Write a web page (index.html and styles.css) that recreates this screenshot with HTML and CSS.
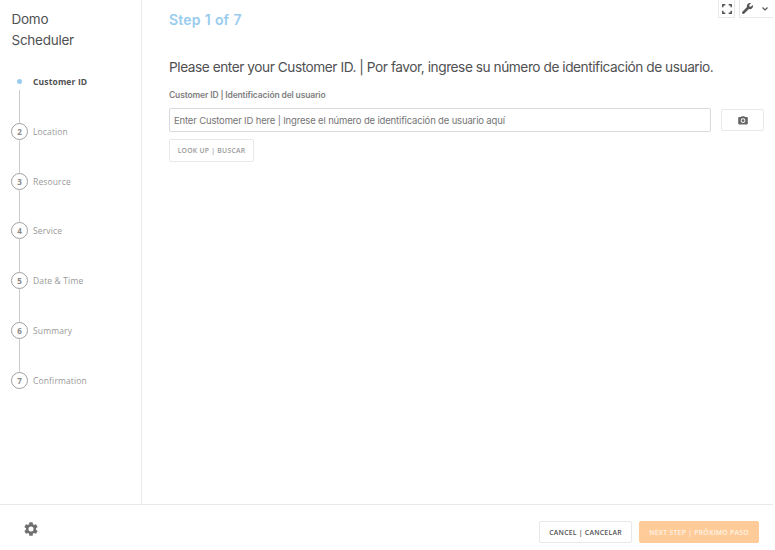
FILE: index.html
```
<!DOCTYPE html>
<html lang="en">
<head>
<meta charset="utf-8">
<title>Domo Scheduler</title>
<link rel="stylesheet" href="styles.css">
</head>
<body>
<div class="app">
  <div class="body">
    <aside class="sidebar">
      <h1 class="brand">Domo<br>Scheduler</h1>
      <ol class="steps">
        <li class="step current"><span class="mark"><i class="dot"></i></span><span class="name">Customer ID</span></li>
        <li class="step"><span class="mark"><b class="num">2</b></span><span class="name">Location</span></li>
        <li class="step"><span class="mark"><b class="num">3</b></span><span class="name">Resource</span></li>
        <li class="step"><span class="mark"><b class="num">4</b></span><span class="name">Service</span></li>
        <li class="step"><span class="mark"><b class="num">5</b></span><span class="name">Date &amp; Time</span></li>
        <li class="step"><span class="mark"><b class="num">6</b></span><span class="name">Summary</span></li>
        <li class="step"><span class="mark"><b class="num">7</b></span><span class="name">Confirmation</span></li>
      </ol>
    </aside>
    <main class="content">
      <h2 class="progress">Step 1 of 7</h2>
      <p class="prompt">Please enter your Customer ID. | Por favor, ingrese su número de identificación de usuario.</p>
      <label class="label" for="cid">Customer ID | Identificación del usuario</label>
      <div class="row">
        <input class="field" id="cid" type="text" placeholder="Enter Customer ID here | Ingrese el número de identificación de usuario aquí">
        <button class="btn camera" aria-label="Camera">
          <svg width="10" height="9" viewBox="0 0 10 9"><path fill="#666" fill-rule="evenodd" d="M1 1.1h1.9L3.6.3h2.8l.7.8H9c.5 0 .8.3.8.8v5.7c0 .5-.3.8-.8.8H1c-.5 0-.8-.3-.8-.8V1.9c0-.5.3-.8.8-.8zM5 2.2a2.4 2.4 0 1 0 0 4.8 2.4 2.4 0 0 0 0-4.8z"/><circle cx="5" cy="4.6" r="1.4" fill="#666"/></svg>
        </button>
      </div>
      <button class="btn lookup">LOOK UP | BUSCAR</button>
      <div class="tools">
        <span class="tool full"><svg width="10" height="10" viewBox="0 0 10 10"><path fill="none" stroke="#555" stroke-width="1.5" d="M.8 3.3V.8h2.5M6.7.8h2.5v2.5M9.2 6.7v2.5H6.7M3.3 9.2H.8V6.7"/></svg></span>
        <span class="tool menu"><svg width="11" height="11" viewBox="0 0 512 512"><path fill="#555" d="M507.7 109.1c-2.2-9-13.5-12.1-20.1-5.5l-74.4 74.4-67.9-11.3L334 98.8l74.4-74.4c6.6-6.6 3.4-17.9-5.7-20.2-47.4-11.7-99.6.9-136.6 37.9-39.6 39.6-50.6 97.1-34.1 147.2L18.7 402.8c-25 25-25 65.5 0 90.5s65.5 25 90.5 0l213.2-213.2c50.1 16.7 107.5 5.7 147.4-34.2 37.1-37.1 49.7-89.3 37.9-136.8z"/></svg><svg width="6" height="4" viewBox="0 0 6 4"><path fill="none" stroke="#555" stroke-width="1.2" d="M.5.5 3 3 5.5.5"/></svg></span>
      </div>
    </main>
  </div>
  <footer class="footer">
    <svg class="gear" width="14" height="14" viewBox="2 2 20 20"><path fill="#707070" d="M19.14 12.94c.04-.3.06-.61.06-.94s-.02-.64-.07-.94l2.03-1.58c.18-.14.23-.41.12-.61l-1.92-3.32c-.12-.22-.37-.29-.59-.22l-2.39.96c-.5-.38-1.03-.7-1.62-.94l-.36-2.54c-.04-.24-.24-.41-.48-.41h-3.84c-.24 0-.43.17-.47.41l-.36 2.54c-.59.24-1.13.57-1.62.94l-2.39-.96c-.22-.08-.47 0-.59.22L2.74 8.87c-.12.21-.08.47.12.61l2.03 1.58c-.05.3-.09.63-.09.94s.02.64.07.94l-2.03 1.58c-.18.14-.23.41-.12.61l1.92 3.32c.12.22.37.29.59.22l2.39-.96c.5.38 1.03.7 1.62.94l.36 2.54c.05.24.24.41.48.41h3.84c.24 0 .44-.17.47-.41l.36-2.54c.59-.24 1.13-.56 1.62-.94l2.39.96c.22.08.47 0 .59-.22l1.92-3.32c.12-.22.07-.47-.12-.61l-2.01-1.58zM12 15.6A3.6 3.6 0 1 1 12 8.4a3.6 3.6 0 0 1 0 7.2z"/></svg>
    <button class="btn cancel">CANCEL | CANCELAR</button>
    <button class="btn next">NEXT STEP | PRÓXIMO PASO</button>
  </footer>
</div>
</body>
</html>
```
FILE: styles.css
```
* { box-sizing: border-box; }
body { margin: 0; background: #fff; color: #505152; font-family: "Open Sans", sans-serif; }
h1, h2, p, ol { margin: 0; padding: 0; font-weight: 400; }
.app { width: 773px; height: 550px; display: flex; flex-direction: column; }
.body { height: 504px; display: flex; }
.sidebar { flex: 0 0 142px; padding: 9px 0 0 11px; border-right: 1px solid #ebebeb; }
.brand { padding-left: .5px; font: 400 13.5px/21px Inter, sans-serif; letter-spacing: -.25px; }
.steps { list-style: none; margin-top: 22px; }
.step { position: relative; height: 49.83px; display: flex; align-items: flex-start; gap: 5px; }
.step::before { content: ""; position: absolute; left: 8px; top: 17px; width: 1px; height: 33px; background: #ccc; }
.step:first-child::before { top: 8px; margin-top: 0; height: 42px; clip-path: inset(0); }
.step.current::before { top: 8px; background: linear-gradient(transparent 0 1px, #ccc 1px); }
.step:last-child::before { display: none; }
.mark { position: relative; width: 17px; height: 17px; display: flex; align-items: center; justify-content: center; background: #fff; }
.dot { width: 5px; height: 5px; border-radius: 50%; background: #99ccee; }
.num { width: 17px; height: 17px; border: 1px solid #a0a0a0; border-radius: 50%; text-align: center; font-size: 8px; line-height: 15px; color: #888; }
.name { font-size: 8.5px; line-height: 17px; color: #999; letter-spacing: .14px; }
.current .name { font-weight: 700; color: #505152; }
.content { position: relative; flex: 1; min-width: 0; padding: 9px 9px 0 27px; font-family: Inter, sans-serif; }
.progress { font-size: 14px; line-height: 21px; font-weight: 600; color: #99ccee; letter-spacing: .15px; word-spacing: .5px; }
.prompt { margin-top: 27px; font-size: 13.7px; line-height: 21px; letter-spacing: -.46px; white-space: nowrap; }
.label { display: block; margin-top: 11px; font-size: 8.5px; line-height: 13px; font-weight: 600; letter-spacing: -.14px; color: #808080; }
.row { display: flex; align-items: center; justify-content: space-between; margin-top: 6px; height: 24px; }
.field { width: 542px; height: 24px; border: 1px solid #d9d9d9; border-radius: 2px; padding: 0 4px; font: 400 9.5px Inter, sans-serif; letter-spacing: -.16px; background: #fff; }
.field::placeholder { color: #757575; opacity: 1; }
.btn { display: flex; align-items: center; justify-content: center; padding: 0; border: 1px solid #e8e8e8; border-radius: 2px; background: #fff; font: 600 6.8px "Open Sans", sans-serif; letter-spacing: .27px; white-space: nowrap; }
.camera { width: 43px; height: 22px; }
.lookup { width: 85px; height: 23px; margin-top: 7px; color: #999; }
.tools { position: absolute; right: 0; top: 0; display: flex; gap: 4px; }
.tool { height: 18px; display: flex; align-items: center; justify-content: center; border: 1px solid #e8e8e8; border-top: 0; }
.full { width: 17px; }
.menu { width: 34px; border-right: 0; gap: 9px; padding-right: 3px; }
.footer { height: 46px; border-top: 1px solid #e9e9e9; display: flex; padding: 16px 14px 0 24px; }
.gear { margin: 1px auto 0 0; }
.cancel { width: 93px; height: 22px; color: #505152; margin-right: 7px; }
.next { width: 120px; height: 22px; color: #fff2e5; background: #ffcc99; border-color: #ffcc99; }
```
